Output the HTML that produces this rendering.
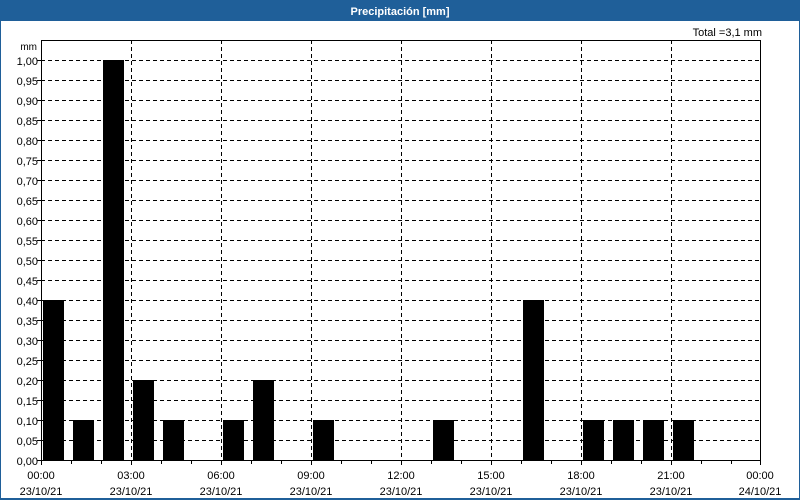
<!DOCTYPE html>
<html><head><meta charset="utf-8"><style>
body{margin:0;width:800px;height:500px;overflow:hidden;background:#fff;font-family:"Liberation Sans","DejaVu Sans",sans-serif;}
</style></head><body>
<svg width="800" height="500" xmlns="http://www.w3.org/2000/svg" style="display:block">
<rect x="0" y="0" width="800" height="500" fill="#1f5f99"/>
<rect x="1" y="21" width="798" height="477" fill="#fff"/>
<text x="400" y="15" fill="#fff" font-size="11" font-weight="bold" text-anchor="middle" font-family="Liberation Sans, sans-serif">Precipitación [mm]</text>
<text x="762" y="36" font-size="11" text-anchor="end" fill="#000">Total =3,1 mm</text>
<text x="37" y="50" font-size="10" text-anchor="end">mm</text>
<g stroke="#000" stroke-dasharray="4,3" stroke-width="1">
<path d="M41 60.5H760M41 80.5H760M41 100.5H760M41 120.5H760M41 140.5H760M41 160.5H760M41 180.5H760M41 200.5H760M41 220.5H760M41 240.5H760M41 260.5H760M41 280.5H760M41 300.5H760M41 320.5H760M41 340.5H760M41 360.5H760M41 380.5H760M41 400.5H760M41 420.5H760M41 440.5H760"/>
<path d="M131.5 40V460M221.5 40V460M311.5 40V460M401.5 40V460M491.5 40V460M581.5 40V460M671.5 40V460"/>
</g>
<g fill="#000">
<rect x="43" y="300" width="21" height="160"/>
<rect x="73" y="420" width="21" height="40"/>
<rect x="103" y="60" width="21" height="400"/>
<rect x="133" y="380" width="21" height="80"/>
<rect x="163" y="420" width="21" height="40"/>
<rect x="223" y="420" width="21" height="40"/>
<rect x="253" y="380" width="21" height="80"/>
<rect x="313" y="420" width="21" height="40"/>
<rect x="433" y="420" width="21" height="40"/>
<rect x="523" y="300" width="21" height="160"/>
<rect x="583" y="420" width="21" height="40"/>
<rect x="613" y="420" width="21" height="40"/>
<rect x="643" y="420" width="21" height="40"/>
<rect x="673" y="420" width="21" height="40"/>
</g>
<rect x="41.5" y="40.5" width="719" height="420" fill="none" stroke="#000"/>
<g stroke="#000">
<path d="M41.5 460V465M71.5 460V464M101.5 460V464M131.5 460V465M161.5 460V464M191.5 460V464M221.5 460V465M251.5 460V464M281.5 460V464M311.5 460V465M341.5 460V464M371.5 460V464M401.5 460V465M431.5 460V464M461.5 460V464M491.5 460V465M521.5 460V464M551.5 460V464M581.5 460V465M611.5 460V464M641.5 460V464M671.5 460V465M701.5 460V464M731.5 460V464M760.5 460V465"/>
<path d="M37 60.5H41M37 80.5H41M37 100.5H41M37 120.5H41M37 140.5H41M37 160.5H41M37 180.5H41M37 200.5H41M37 220.5H41M37 240.5H41M37 260.5H41M37 280.5H41M37 300.5H41M37 320.5H41M37 340.5H41M37 360.5H41M37 380.5H41M37 400.5H41M37 420.5H41M37 440.5H41M37 460.5H41"/>
</g>
<g font-size="11" text-anchor="end" fill="#000">
<text x="38" y="65">1,00</text><text x="38" y="85">0,95</text><text x="38" y="105">0,90</text><text x="38" y="125">0,85</text><text x="38" y="145">0,80</text><text x="38" y="165">0,75</text><text x="38" y="185">0,70</text><text x="38" y="205">0,65</text><text x="38" y="225">0,60</text><text x="38" y="245">0,55</text><text x="38" y="265">0,50</text><text x="38" y="285">0,45</text><text x="38" y="305">0,40</text><text x="38" y="325">0,35</text><text x="38" y="345">0,30</text><text x="38" y="365">0,25</text><text x="38" y="385">0,20</text><text x="38" y="405">0,15</text><text x="38" y="425">0,10</text><text x="38" y="445">0,05</text><text x="38" y="465">0,00</text>
</g>
<g font-size="11" text-anchor="middle" fill="#000">
<text x="41" y="479">00:00</text><text x="41" y="495">23/10/21</text>
<text x="131" y="479">03:00</text><text x="131" y="495">23/10/21</text>
<text x="221" y="479">06:00</text><text x="221" y="495">23/10/21</text>
<text x="311" y="479">09:00</text><text x="311" y="495">23/10/21</text>
<text x="401" y="479">12:00</text><text x="401" y="495">23/10/21</text>
<text x="491" y="479">15:00</text><text x="491" y="495">23/10/21</text>
<text x="581" y="479">18:00</text><text x="581" y="495">23/10/21</text>
<text x="671" y="479">21:00</text><text x="671" y="495">23/10/21</text>
<text x="760" y="479">00:00</text><text x="760" y="495">24/10/21</text>
</g>
</svg>
</body></html>
